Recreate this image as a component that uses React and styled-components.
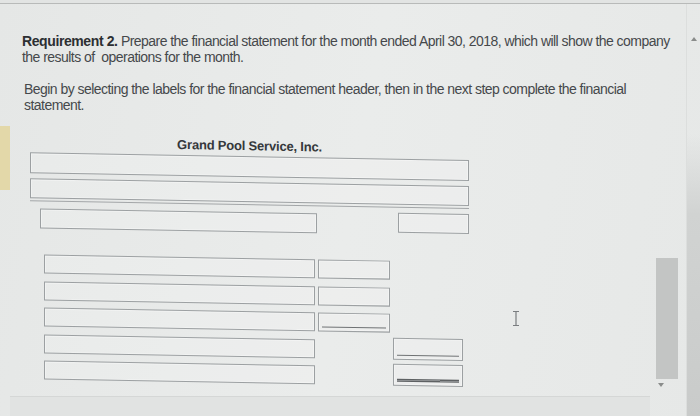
import React from "react";
import styled, { createGlobalStyle } from "styled-components";

const GlobalStyle = createGlobalStyle`
  html, body { margin: 0; padding: 0; background: #e7e9e8; }
  body {
    font-family: "Liberation Sans", Arial, sans-serif;
    color: #44474a;
  }
`;

const Screen = styled.div`
  position: relative;
  width: 700px;
  height: 416px;
  display: flex;
  flex-direction: column;
  overflow: hidden;
  background: linear-gradient(100deg, #e5e7e6 0%, #eaeceb 50%, #e6e8e7 100%);
`;

const TopRule = styled.div`
  flex: none;
  height: 3px;
  border-bottom: 1px solid #b8bab9;
  background: #e2e4e3;
`;

const Body = styled.div`
  flex: 1;
  display: flex;
  min-height: 0;
`;

const Gutter = styled.div`
  flex: none;
  width: 10px;
  padding-top: 122px;
`;

const Highlight = styled.div`
  height: 64px;
  background: #e3d8a9;
`;

const Main = styled.div`
  flex: none;
  width: 640px;
  display: flex;
  flex-direction: column;
`;

const Instructions = styled.div`
  padding-top: 29px;
`;

const Prose = styled.p`
  margin: ${(p) => p.$top}px 0 0 ${(p) => p.$indent}px;
  font-size: 14px;
  line-height: 16px;
  letter-spacing: -0.54px;
  white-space: nowrap;
  color: #45484b;
`;

const Strong = styled.b`
  color: #2c2f32;
  letter-spacing: -0.4px;
`;

/* the statement form leans slightly, as the page does on this screen */
const Form = styled.div`
  transform: skewY(1deg);
  transform-origin: 0 0;
`;

const Header = styled.div`
  margin: 21px 0 0 20px;
  width: 439px;
  display: flex;
  flex-direction: column;
`;

const Title = styled.div`
  height: 16px;
  line-height: 16px;
  font-size: 13px;
  font-weight: bold;
  letter-spacing: -0.2px;
  text-align: center;
  color: #35383b;
`;

const Field = styled.div`
  box-sizing: border-box;
  flex: none;
  width: ${(p) => (p.$w ? `${p.$w}px` : "100%")};
  height: ${(p) => p.$h || 20}px;
  margin-top: ${(p) => p.$mt || 0}px;
  border: 1px solid #9ca0a2;
  background: rgba(255, 255, 255, 0.14);
  box-shadow: inset 0 0 0 1px rgba(255, 255, 255, 0.35);
`;

const Rule = styled.div`
  height: 1px;
  margin-top: 2px;
  background: #a3a6a8;
`;

const HeaderRow = styled.div`
  display: flex;
  justify-content: space-between;
  align-items: flex-start;
  margin-top: 7px;
  padding-left: 10px;
`;

const Grid = styled.div`
  margin: 26px 0 0 34px;
  display: grid;
  grid-template-columns: 271px 72px 70px;
  grid-auto-rows: 19px;
  column-gap: 3px;
  row-gap: 7.5px;
`;

const Cell = styled.div`
  box-sizing: border-box;
  grid-column: ${(p) => p.$col};
  height: ${(p) => p.$h || 19}px;
  margin-top: ${(p) => p.$mt || 0}px;
  border: 1px solid #9ca0a2;
  background-color: rgba(255, 255, 255, 0.14);
  box-shadow: inset 0 0 0 1px rgba(255, 255, 255, 0.35);
  background-repeat: no-repeat;
  background-position: 3px calc(100% - 3px);
  background-size: calc(100% - 6px) ${(p) => (p.$mark === "double" ? 3 : 1)}px;
  background-image: ${(p) =>
    p.$mark === "single"
      ? "linear-gradient(#6f7274, #6f7274)"
      : p.$mark === "double"
      ? "linear-gradient(#5e6163 0 1px, #8c8f91 1px 2px, #5e6163 2px 3px)"
      : "none"};
`;

const Footer = styled.div`
  margin-top: auto;
  height: 19px;
  border-top: 1px solid #d5d7d6;
  background: #e1e3e2;
`;

const ScrollColumn = styled.div`
  flex: none;
  width: 36px;
  padding: 254px 0 0 6px;
  box-sizing: border-box;
  display: flex;
  flex-direction: column;
`;

const Thumb = styled.div`
  width: 22px;
  height: 121px;
  background: #c3c5c4;
`;

const Arrow = styled.div`
  width: 0;
  height: 0;
  margin: ${(p) => p.$m};
  border-left: 3px solid transparent;
  border-right: 3px solid transparent;
  ${(p) => (p.$up ? "border-bottom" : "border-top")}: 4px solid #8a8c8b;
`;

const Edge = styled.div`
  flex: none;
  width: 14px;
  padding-top: 33px;
  box-sizing: border-box;
  display: flex;
  flex-direction: column;
  align-items: center;
  background: linear-gradient(
    to bottom,
    rgba(0, 0, 0, 0) 0,
    rgba(0, 0, 0, 0) 130px,
    #d1d3d2 210px,
    #c9cbca 100%
  );
  border-left: 1px solid #dcdedd;
`;

const Cursor = styled.svg`
  position: absolute;
  left: 512px;
  top: 311px;
`;

const lowerRows = [
  { mid: "plain" },
  { mid: "plain" },
  { mid: "single" },
  { right: "single" },
  { right: "double" },
];

export default function App() {
  return (
    <>
      <GlobalStyle />
      <Screen>
        <TopRule />
        <Body>
          <Gutter>
            <Highlight />
          </Gutter>
          <Main>
            <Instructions>
              <Prose $top={0} $indent={12}>
                <Strong>Requirement 2.</Strong> Prepare the financial statement
                for the month ended April 30, 2018, which will show the company
                <br />
                the results of&nbsp; operations for the month.
              </Prose>
              <Prose $top={16} $indent={14}>
                Begin by selecting the labels for the financial statement
                header, then in the next step complete the financial
                <br />
                statement.
              </Prose>
            </Instructions>
            <Form>
              <Header>
                <Title>Grand Pool Service, Inc.</Title>
                <Field $h={21} $mt={2} />
                <Field $h={20} $mt={5} />
                <Rule />
                <HeaderRow>
                  <Field $w={277} />
                  <Field $w={71} $mt={-2} />
                </HeaderRow>
              </Header>
              <Grid>
                {lowerRows.map((r, i) => (
                  <React.Fragment key={i}>
                    <Cell $col={1} />
                    {r.mid && <Cell $col={2} $mark={r.mid} />}
                    {r.right && (
                      <Cell $col={3} $h={22} $mt={-3} $mark={r.right} />
                    )}
                  </React.Fragment>
                ))}
              </Grid>
            </Form>
            <Footer />
          </Main>
          <ScrollColumn>
            <Thumb />
            <Arrow $m="4px 0 0 2px" />
          </ScrollColumn>
          <Edge>
            <Arrow $up $m="0" />
          </Edge>
        </Body>
        <Cursor width="8" height="15" viewBox="0 0 8 15">
          <path
            d="M1 0.5h6M4 0.5v14M1 14.5h6"
            stroke="#7a7d80"
            strokeWidth="1.2"
            fill="none"
          />
        </Cursor>
      </Screen>
    </>
  );
}
